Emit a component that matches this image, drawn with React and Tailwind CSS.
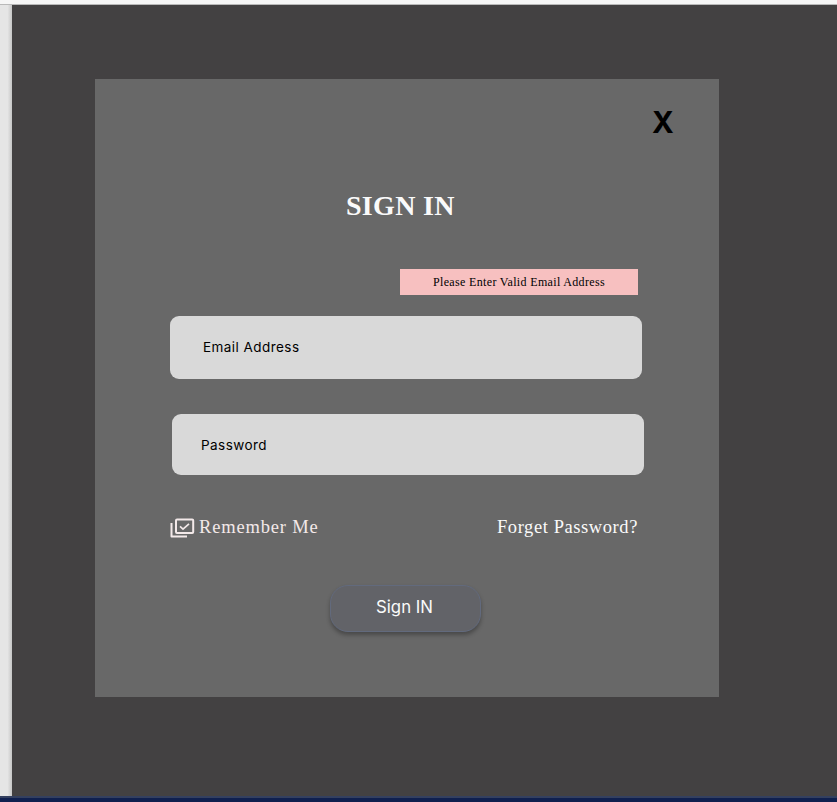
const serif = "font-['Liberation_Serif',serif]";

function RememberIcon() {
  return (
    <svg width="25" height="20" viewBox="0 0 25 20" fill="none" stroke="#f3e9e9" strokeWidth="2" className="block shrink-0">
      <rect x="6" y="1.5" width="17.2" height="13.6" rx="1" />
      <path d="M1.5 5V18.5H17" strokeLinejoin="round" />
      <path d="M10 8.4L13 11.2L19 5.8" strokeWidth="1.7" />
    </svg>
  );
}

export default function App() {
  return (
    <div className="flex h-[802px] w-[837px] flex-col overflow-hidden bg-[#434142] font-['Inter',sans-serif]">
      <div className="h-[5px] shrink-0 border-b border-[#b9b9b9] bg-[#f6f6f6]" />
      <div className="flex h-[791px] shrink-0">
        <div className="flex w-3 shrink-0 bg-[#e5e5e5]">
          <div className="ml-auto w-1 bg-linear-to-r from-[#e2e2e2] to-[#c6c6c6]" />
        </div>
        <main className="ml-[83px] mt-[74px] flex h-[618px] w-[624px] flex-col bg-[#686868]">
          <button className="ml-[557px] mt-[25px] h-9 w-5 text-[29.5px] font-bold leading-9 text-black">X</button>
          <h1 className={`ml-[251px] mt-[48px] h-9 whitespace-nowrap text-[28px] font-bold leading-9 tracking-[0.3px] text-[#fafafa] ${serif}`}>SIGN IN</h1>
          <div className={`ml-[305px] mt-[45px] h-[26px] w-[238px] whitespace-nowrap bg-[#f7c0c0] pl-[33px] text-[12px] leading-[27px] tracking-[0.34px] text-black ${serif}`}>
            Please Enter Valid Email Address
          </div>
          <div className="ml-[75.4px] mt-[21px] h-[63px] w-[472px] rounded-[9px] bg-[#d9d9d9] pl-[32.6px] text-[13.5px] leading-[63px] tracking-[0.45px] text-black">
            Email Address
          </div>
          <div className="ml-[77px] mt-[35px] h-[60.5px] w-[472px] rounded-[9px] bg-[#d9d9d9] pl-[29px] text-[13.5px] leading-[63px] tracking-[0.45px] text-black">
            Password
          </div>
          <div className={`ml-[75px] mt-[37.5px] flex h-8 w-[468px] items-center text-[18.5px] leading-8 ${serif}`}>
            <RememberIcon />
            <span className="-mt-0.5 ml-1 whitespace-nowrap tracking-[0.82px] text-[#f3e9e9]">Remember Me</span>
            <span className="-mt-0.5 ml-auto whitespace-nowrap tracking-[0.58px] text-[#fafafa]">Forget Password?</span>
          </div>
          <button className="ml-[235px] mt-[41px] h-[47px] w-[151px] rounded-[18px] border border-[#626a7d] bg-[#626368] pb-px pr-[2px] text-[16.8px] text-[#fafafa] shadow-[0_3px_4px_rgba(0,0,0,0.3)]">
            Sign IN
          </button>
        </main>
      </div>
      <div className="h-[6px] shrink-0 border-t-2 border-[#34405f] bg-[#10204f]" />
    </div>
  );
}
